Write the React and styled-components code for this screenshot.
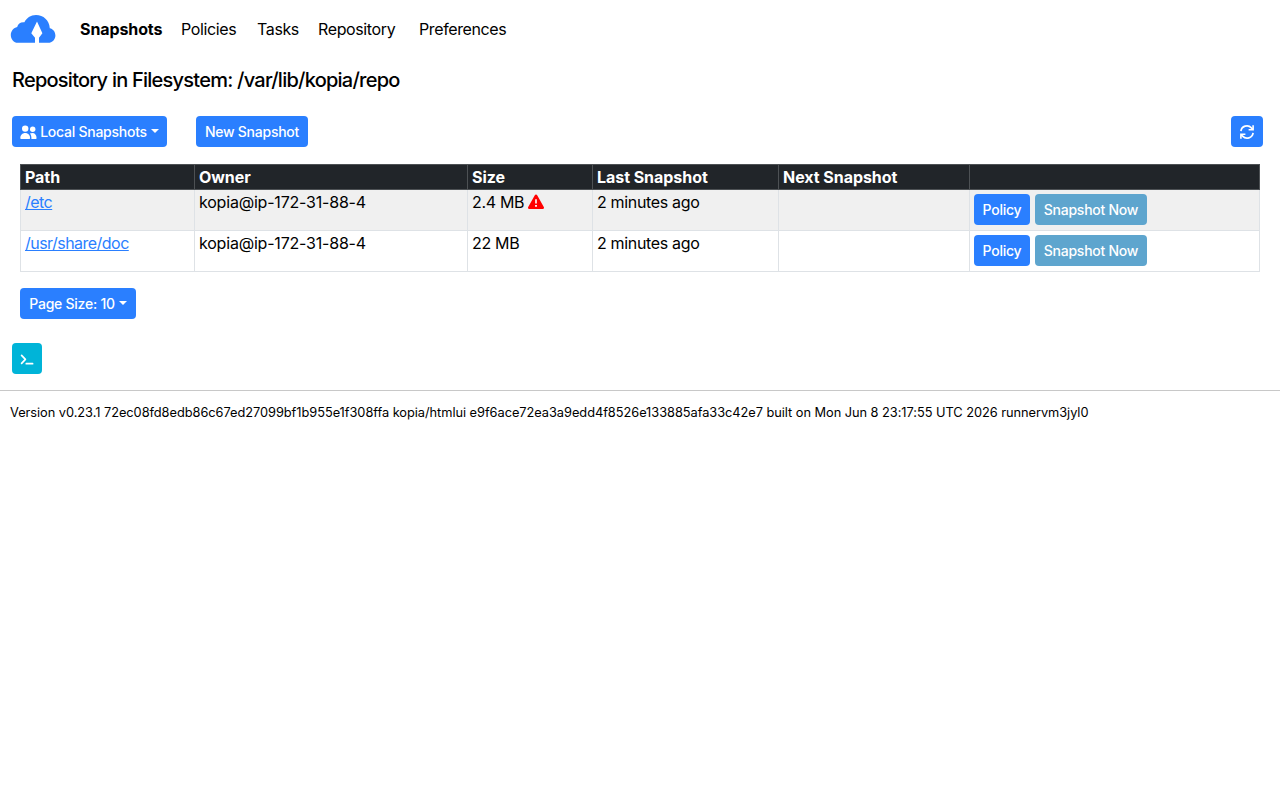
import React from 'react';
import styled, { createGlobalStyle } from 'styled-components';

const GlobalStyle = createGlobalStyle`
  *, *::before, *::after {
    box-sizing: border-box;
  }

  body {
    margin: 0;
    background: #fff;
    color: #000;
    font-family: Inter, "Liberation Sans", sans-serif;
    font-size: 16px;
    line-height: 24px;
    letter-spacing: -0.33px;
  }
`;

const Navbar = styled.nav`
  display: flex;
  align-items: center;
  height: 58px;
  padding-left: 10px;
`;

const Logo = styled.svg`
  display: block;
  width: 46px;
  height: 30px;
  margin-right: 24px;
`;

const NavLink = styled.a`
  width: ${(props) => props.$width}px;
  color: #000;
  font-weight: ${(props) => (props.$active ? 700 : 400)};
  letter-spacing: ${(props) => (props.$active ? '-0.1px' : '-0.38px')};
  text-decoration: none;
  white-space: nowrap;
`;

const RepoTitle = styled.h5`
  margin: 10px 12px 0;
  font-size: 20px;
  font-weight: 500;
  line-height: 24px;
  letter-spacing: -0.76px;
`;

const Toolbar = styled.div`
  display: flex;
  align-items: center;
  gap: 29px;
  margin-top: 24px;
  padding: 0 17px 0 12px;
`;

const Button = styled.button`
  display: inline-flex;
  align-items: center;
  justify-content: center;
  flex: none;
  width: ${(props) => props.$width}px;
  height: 31px;
  padding: 0;
  border: 0;
  border-radius: 4px;
  background: ${(props) => props.$color || '#2a7fff'};
  color: #fff;
  font-family: inherit;
  font-size: 14px;
  font-weight: 500;
  line-height: 21px;
  letter-spacing: -0.25px;
  white-space: nowrap;

  svg {
    flex: none;
  }
`;

const RefreshButton = styled(Button)`
  margin-left: auto;
`;

const UsersSvg = styled.svg`
  width: 17px;
  height: 14px;
  margin-right: 3px;
`;

const Caret = styled.span`
  margin: 0 0 1px 4px;
  border-top: 4px solid #fff;
  border-right: 4px solid transparent;
  border-left: 4px solid transparent;
`;

const TableArea = styled.div`
  padding: 17px 20px 0;
`;

const Table = styled.table`
  width: 1239px;
  table-layout: fixed;
  border-collapse: collapse;
`;

const HeadCell = styled.th`
  height: 25px;
  padding: 0 4px;
  border: 1px solid #4d5154;
  background: #212529;
  color: #fff;
  font-weight: 700;
  letter-spacing: -0.05px;
  text-align: left;
`;

const Row = styled.tr`
  height: 41px;
  background: ${(props) => (props.$striped ? '#f0f0f0' : '#fff')};
`;

const Cell = styled.td`
  padding: 0 4px;
  border: 1px solid #dee2e6;
  vertical-align: top;
`;

const OwnerCell = styled(Cell)`
  letter-spacing: -0.2px;
`;

const PathLink = styled.a`
  color: #2a7fff;
  letter-spacing: -0.53px;
  text-decoration: underline;
`;

const Actions = styled.div`
  display: flex;
  gap: 5px;
  padding-top: 4px;
`;

const WarningIcon = styled.svg`
  width: 16px;
  height: 16px;
  margin-left: 4px;
  vertical-align: -2px;
`;

const Pagination = styled.div`
  display: flex;
  padding: 16px 20px 0;
`;

const CliBar = styled.div`
  display: flex;
  padding: 24px 12px 16px;
`;

const Footer = styled.footer`
  padding: 12px 10px;
  border-top: 1px solid #c8c8c8;
  font-size: 12.8px;
  line-height: 19px;
  letter-spacing: -0.04px;
  white-space: nowrap;
`;

const navItems = [
  { label: 'Snapshots', width: 101, active: true },
  { label: 'Policies', width: 76 },
  { label: 'Tasks', width: 61 },
  { label: 'Repository', width: 101 },
  { label: 'Preferences', width: 100 },
];

const columns = [
  { label: 'Path', width: 174 },
  { label: 'Owner', width: 273 },
  { label: 'Size', width: 125 },
  { label: 'Last Snapshot', width: 186 },
  { label: 'Next Snapshot', width: 191 },
  { label: '', width: 290 },
];

const snapshots = [
  { path: '/etc', owner: 'kopia@ip-172-31-88-4', size: '2.4 MB', last: '2 minutes ago', warning: true },
  { path: '/usr/share/doc', owner: 'kopia@ip-172-31-88-4', size: '22 MB', last: '2 minutes ago' },
];

const CloudLogo = () => (
  <Logo viewBox="0 0 46 30" aria-label="Kopia">
    <path
      fill="#2a7fff"
      d="M7.800 28.800C3.800 28.800.8 25.300.8 21c0-4.200 2.800-7.400 6.400-8.100C8 9.700 10.600 7.900 14.400 8.300C16.400 4.200 20.700 1 26 1c7.400 0 13.300 5.300 13.800 13.200c3.400.7 5.600 3.700 5.600 7.300c0 4.100-3.100 7.300-7.200 7.300z"
    />
    <path fill="#fff" d="M27 7.500L32.400 19.200L29 23.800V29H25V23.800L21.300 19.200z" />
  </Logo>
);

const UsersIcon = () => (
  <UsersSvg viewBox="0 0 17 14" fill="#fff">
    <circle cx="5.200" cy="3.600" r="3.200" />
    <circle cx="12.700" cy="4.300" r="2.700" />
    <path d="M.3 13.200C.3 10.200 2.300 8 5.200 8s4.900 2.200 4.900 5.200c0 .4-.3.800-.8.800H1.100c-.5 0-.8-.4-.8-.8z" />
    <path d="M11.400 14c.2-2.400-.3-4.300-1.500-5.600c.7-.3 1.500-.5 2.500-.5c2.500 0 4.200 2 4.200 5.300c0 .5-.3.800-.8.800z" />
  </UsersSvg>
);

const RefreshIcon = () => (
  <svg width="16" height="16" viewBox="0 0 16 16" fill="none" stroke="#fff" strokeWidth="1.700">
    <path d="M1.900 7.200A6.100 6.100 0 0 1 12.400 3.800L13.700 5.100" />
    <path d="M14.100 8.800A6.100 6.100 0 0 1 3.600 12.200L2.300 10.900" />
    <path d="M14.100 1.200V5.700H9.600M1.900 14.800V10.300h4.500" strokeWidth="1.600" />
  </svg>
);

const TerminalIcon = () => (
  <svg width="14" height="14" viewBox="0 0 14 14" fill="none" stroke="#fff" strokeWidth="1.700">
    <path d="M1.600 3.300L5.400 7.300L1.600 11.300M6.300 11.700h6.300" strokeLinecap="round" strokeLinejoin="round" />
  </svg>
);

const App = () => {
  return (
    <>
      <GlobalStyle />
      <Navbar>
        <CloudLogo />
        {navItems.map((item) => (
          <NavLink key={item.label} $width={item.width} $active={item.active}>
            {item.label}
          </NavLink>
        ))}
      </Navbar>
      <RepoTitle>Repository in Filesystem: /var/lib/kopia/repo</RepoTitle>
      <Toolbar>
        <Button $width={155}>
          <UsersIcon />
          Local Snapshots
          <Caret />
        </Button>
        <Button $width={112}>New Snapshot</Button>
        <RefreshButton $width={32} aria-label="Refresh">
          <RefreshIcon />
        </RefreshButton>
      </Toolbar>
      <TableArea>
        <Table>
          <colgroup>
            {columns.map((column, index) => (
              <col key={index} width={column.width} />
            ))}
          </colgroup>
          <thead>
            <tr>
              {columns.map((column, index) => (
                <HeadCell key={index}>{column.label}</HeadCell>
              ))}
            </tr>
          </thead>
          <tbody>
            {snapshots.map((item, index) => (
              <Row key={item.path} $striped={index % 2 === 0}>
                <Cell>
                  <PathLink>{item.path}</PathLink>
                </Cell>
                <OwnerCell>{item.owner}</OwnerCell>
                <Cell>
                  {item.size}
                  {item.warning && (
                    <WarningIcon viewBox="0 0 16 16">
                      <path
                        fill="#f00"
                        d="M8 .5c.5 0 1 .3 1.200.7l6.600 11.900c.5.900-.1 1.900-1.100 1.900H1.300c-1 0-1.600-1-1.100-1.900L6.800 1.200C7 .8 7.500.5 8 .5z"
                      />
                      <path fill="#fff" d="M7.200 5.200h1.600v4.300H7.200zM7.100 11h1.800v1.700H7.100z" />
                    </WarningIcon>
                  )}
                </Cell>
                <Cell>{item.last}</Cell>
                <Cell />
                <Cell>
                  <Actions>
                    <Button $width={56}>Policy</Button>
                    <Button $width={112} $color="#5ea5ce">
                      Snapshot Now
                    </Button>
                  </Actions>
                </Cell>
              </Row>
            ))}
          </tbody>
        </Table>
      </TableArea>
      <Pagination>
        <Button $width={116}>
          Page Size: 10
          <Caret />
        </Button>
      </Pagination>
      <CliBar>
        <Button $width={30} $color="#00b4d8" aria-label="Show CLI">
          <TerminalIcon />
        </Button>
      </CliBar>
      <Footer>
        Version v0.23.1 72ec08fd8edb86c67ed27099bf1b955e1f308ffa kopia/htmlui
        e9f6ace72ea3a9edd4f8526e133885afa33c42e7 built on Mon Jun 8 23:17:55 UTC 2026 runnervm3jyl0
      </Footer>
    </>
  );
};

export default App;
